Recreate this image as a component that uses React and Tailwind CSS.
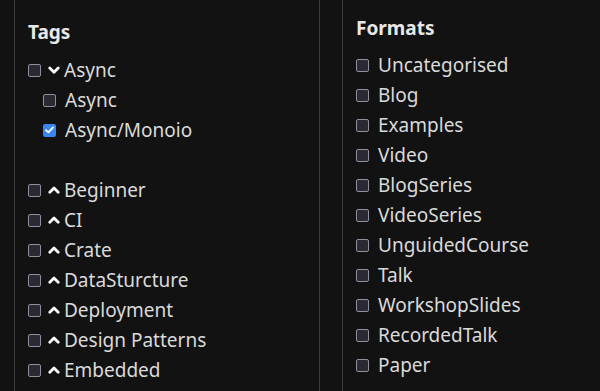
import React from 'react';

const tagGroups = [
  { name: 'Async', open: true, children: [{ name: 'Async' }, { name: 'Async/Monoio', checked: true }] },
  { name: 'Beginner' },
  { name: 'CI' },
  { name: 'Crate' },
  { name: 'DataSturcture' },
  { name: 'Deployment' },
  { name: 'Design Patterns' },
  { name: 'Embedded' },
];

const formats = [
  'Uncategorised',
  'Blog',
  'Examples',
  'Video',
  'BlogSeries',
  'VideoSeries',
  'UnguidedCourse',
  'Talk',
  'WorkshopSlides',
  'RecordedTalk',
  'Paper',
];

const Box = ({ checked }) =>
  checked ? (
    <span className="flex h-[13px] w-[13px] shrink-0 items-center justify-center rounded-[2px] bg-[#3a86f0]">
      <svg width="9" height="8" viewBox="0 0 9 8">
        <polyline points="1,4.2 3.4,6.4 8,1.4" fill="none" stroke="#fff" strokeWidth="1.8" strokeLinecap="round" strokeLinejoin="round" />
      </svg>
    </span>
  ) : (
    <span className="block h-[13px] w-[13px] shrink-0 rounded-[2px] border border-[#8f8f9d] bg-[#2b2a33]" />
  );

const Chevron = ({ open }) => (
  <svg width="12" height="12" viewBox="0 0 12 12" className="shrink-0">
    <polyline
      points={open ? '1.8,4 6,8.2 10.2,4' : '1.8,8.2 6,4 10.2,8.2'}
      fill="none"
      stroke="#fff"
      strokeWidth="2.8"
      strokeLinecap="round"
      strokeLinejoin="round"
    />
  </svg>
);

const App = () => {
  return (
    <div
      className="flex h-[391px] w-[600px] overflow-hidden bg-[#121212] text-[#dadada]"
      style={{ fontFamily: '"Noto Sans", "Open Sans", sans-serif' }}
    >
      <div className="ml-[14px] w-[306px] border-x border-[#3a3a3a] pl-[13px] pt-[20px]">
        <h3 className="mb-[11px] h-[24px] text-[19px] font-bold leading-[24px] text-[#e8e8e8]">Tags</h3>
        <ul>
          {tagGroups.map((tag) => (
            <li key={tag.name}>
              <label className="flex h-[30px] items-center">
                <Box />
                <span className="ml-[7px] mr-[4px]">
                  <Chevron open={tag.open} />
                </span>
                <span className="text-[19px] leading-[24px]">{tag.name}</span>
              </label>
              {tag.open && (
                <ul className="mb-[30px]">
                  {tag.children.map((child) => (
                    <li key={child.name}>
                      <label className="flex h-[30px] items-center pl-[15px]">
                        <Box checked={child.checked} />
                        <span className="ml-[9px] text-[19px] leading-[24px]">{child.name}</span>
                      </label>
                    </li>
                  ))}
                </ul>
              )}
            </li>
          ))}
        </ul>
      </div>
      <div className="ml-[22px] flex-1 border-l border-[#3a3a3a] pl-[13px] pt-[16px]">
        <h3 className="mb-[10px] h-[24px] text-[19px] font-bold leading-[24px] text-[#e8e8e8]">Formats</h3>
        <ul>
          {formats.map((f) => (
            <li key={f}>
              <label className="flex h-[30px] items-center">
                <Box />
                <span className="ml-[9px] text-[19px] leading-[24px]">{f}</span>
              </label>
            </li>
          ))}
        </ul>
      </div>
    </div>
  );
};

export default App;
